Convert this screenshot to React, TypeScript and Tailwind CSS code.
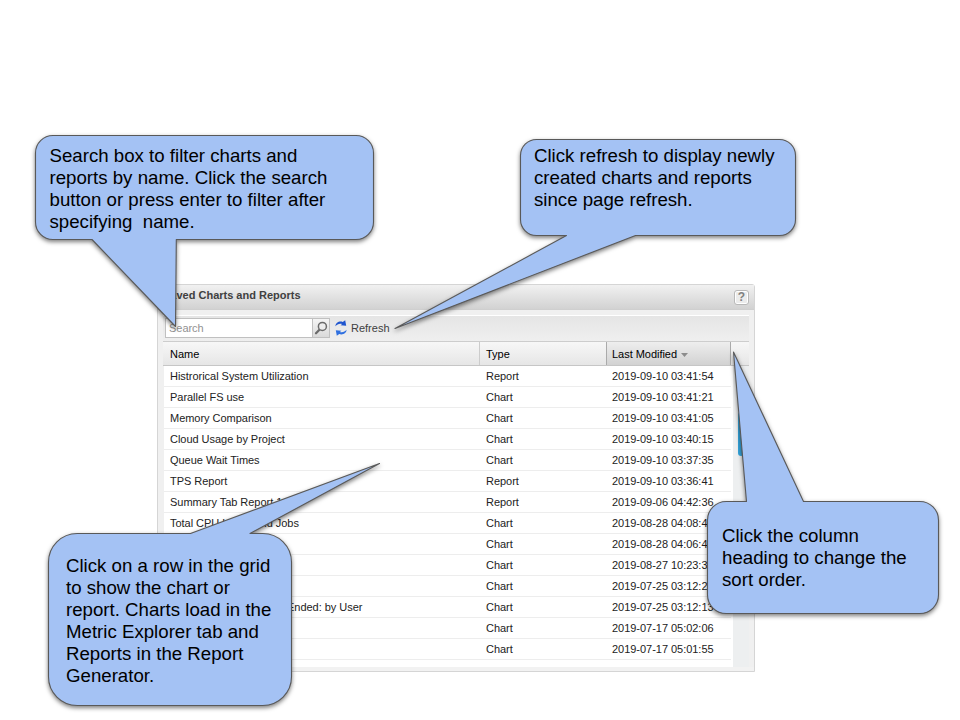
import React from "react";

type Row = { name: string; type: "Report" | "Chart"; modified: string; indent?: boolean };

const rows: Row[] = [
  { name: "Histrorical System Utilization", type: "Report", modified: "2019-09-10 03:41:54" },
  { name: "Parallel FS use", type: "Chart", modified: "2019-09-10 03:41:21" },
  { name: "Memory Comparison", type: "Chart", modified: "2019-09-10 03:41:05" },
  { name: "Cloud Usage by Project", type: "Chart", modified: "2019-09-10 03:40:15" },
  { name: "Queue Wait Times", type: "Chart", modified: "2019-09-10 03:37:35" },
  { name: "TPS Report", type: "Report", modified: "2019-09-10 03:36:41" },
  { name: "Summary Tab Report 1", type: "Report", modified: "2019-09-06 04:42:36" },
  { name: "Total CPU Hours and Jobs", type: "Chart", modified: "2019-08-28 04:08:43" },
  { name: "", type: "Chart", modified: "2019-08-28 04:06:41" },
  { name: "", type: "Chart", modified: "2019-08-27 10:23:32" },
  { name: "", type: "Chart", modified: "2019-07-25 03:12:25" },
  { name: "Ended: by User", type: "Chart", modified: "2019-07-25 03:12:13", indent: true },
  { name: "", type: "Chart", modified: "2019-07-17 05:02:06" },
  { name: "", type: "Chart", modified: "2019-07-17 05:01:55" },
];

function SearchIcon() {
  return (
    <svg width="16" height="16" viewBox="0 0 16 16" fill="none">
      <path d="M6.4 9.8 3 13.2" stroke="#6b6b6b" strokeWidth="2.3" strokeLinecap="round" />
      <circle cx="9.4" cy="6.4" r="4" fill="#ededed" stroke="#6b6b6b" strokeWidth="1.5" />
    </svg>
  );
}

function RefreshIcon() {
  return (
    <svg width="12" height="16" viewBox="0 0 12 16">
      <path d="M.4 6.2C.6 2.8 4.2.6 7.7 1.9L10.2.3 11.2 5.7 5.6 5.3 7.1 4.1C4.6 3.2 2.2 4.2.4 6.2Z" fill="#1f55cf" />
      <path d="M11.6 9.8C11.4 13.2 7.8 15.4 4.3 14.1L1.8 15.7.8 10.3 6.4 10.7 4.9 11.9C7.4 12.8 9.8 11.8 11.6 9.8Z" fill="#2f70e0" />
    </svg>
  );
}

function Panel() {
  return (
    <section className="flex h-[388px] w-[598px] flex-col rounded-t-[3px] border border-[#d5d5d5] bg-[#f0f0f0] text-[11px] leading-[13px] tracking-[-0.03px] text-[#222]">
      <header className="flex h-[25px] shrink-0 items-center justify-between border-b border-[#cfcfcf] bg-linear-to-b from-[#f1f1f1] to-[#d2d2d2] px-[5px]">
        <h1 className="pb-[3px] font-bold tracking-normal text-[#404040]">Saved Charts and Reports</h1>
        <span className="flex h-[15px] w-[15px] items-center justify-center rounded-[3px] border border-[#b9b9b9] bg-[#ececec] text-[12px] font-bold text-[#808080] shadow-[inset_0_0_0_1px_#fff]">
          ?
        </span>
      </header>
      <div className="mx-[5px] mt-[5px] flex min-h-0 flex-1 flex-col">
        <div className="flex h-[27px] shrink-0 items-center border-t border-b border-t-white border-b-[#cdcdcd] bg-linear-to-b from-[#e5e5e5] to-[#efefef] pb-px pl-[2px]">
          <div className="flex h-[20px] w-[165px] border border-[#c0c0c0] bg-white">
            <span className="flex-1 pt-[3px] pl-[3px] text-[#929292]">Search</span>
            <span className="flex w-[17px] items-center justify-center border-l border-[#c0c0c0] bg-linear-to-b from-[#f5f5f5] to-[#dadada]">
              <SearchIcon />
            </span>
          </div>
          <span className="ml-[5px]">
            <RefreshIcon />
          </span>
          <span className="mt-px ml-[4px] tracking-normal text-[#404040]">Refresh</span>
        </div>
        <div className="flex h-[24px] shrink-0 border-b border-[#c6c6c6] bg-linear-to-b from-[#f7f7f7] to-[#e6e6e6] pl-px text-black">
          <div className="w-[316px] border-r border-[#cccccc] pt-[6px] pl-[6px]">Name</div>
          <div className="w-[127px] border-r border-[#aaaaaa] pt-[6px] pl-[6px]">Type</div>
          <div className="flex w-[124px] border-r border-[#aaaaaa] bg-linear-to-b from-[#eeeeee] to-[#d2d2d2] pt-[6px] pl-[5px]">
            Last Modified
            <svg width="7" height="4" viewBox="0 0 7 4" className="mt-[5px] ml-[4px]">
              <path d="M0 0h7L3.5 4Z" fill="#8c8c8c" />
            </svg>
          </div>
        </div>
        <div className="flex min-h-0 flex-1">
          <div className="ml-px flex w-[569px] flex-col overflow-hidden bg-white">
            {rows.map((r) => (
              <div key={r.modified} className="flex h-[21px] w-[567px] shrink-0 items-center border-b border-[#ededed]">
                <span className={r.indent ? "w-[316px] pl-[123px]" : "w-[316px] pl-[6px]"}>{r.name}</span>
                <span className="w-[126px] pl-[6px]">{r.type}</span>
                <span className="pl-[6px] whitespace-nowrap">{r.modified}</span>
              </div>
            ))}
          </div>
          <div className="flex flex-1 justify-center bg-[#edeff0]">
            <div className="mt-[46px] h-[44px] w-[6px] rounded-[3px] bg-[#35a5dc]" />
          </div>
        </div>
      </div>
      <div className="h-[4px] shrink-0 bg-[#f2f2f2]" />
    </section>
  );
}

function Callout({ place, outline, children }: { place: string; outline: string; children: React.ReactNode }) {
  return (
    <>
      <svg
        className="absolute top-0 left-0 drop-shadow-[0px_2px_2px_rgba(0,0,0,0.5)]"
        width="960"
        height="720"
        viewBox="0 0 960 720"
      >
        <path d={outline} fill="#a4c2f4" stroke="#595959" strokeWidth="1.1" strokeLinejoin="round" />
      </svg>
      <p className={place}>{children}</p>
    </>
  );
}

export default function App() {
  return (
    <main className="relative h-[720px] w-[960px] overflow-hidden bg-white pt-[284px] pl-[157px] font-['Liberation_Sans',Arial,sans-serif]">
      <Panel />
      <Callout
        place="absolute top-[145px] left-[49.5px] text-[18.67px] leading-[22px] whitespace-pre text-black"
        outline="M53 135.5H356A17.5 17.5 0 0 1 373.5 153V222A17.5 17.5 0 0 1 356 239.5H176.3L175.5 326.5 92 239.5H53A17.5 17.5 0 0 1 35.5 222V153A17.5 17.5 0 0 1 53 135.5Z"
      >
        {"Search box to filter charts and\nreports by name. Click the search\nbutton or press enter to filter after\nspecifying  name."}
      </Callout>
      <Callout
        place="absolute top-[145px] left-[534px] text-[18.67px] leading-[22px] whitespace-pre text-black"
        outline="M536.5 139.5H779.5A16 16 0 0 1 795.5 155.5V219.5A16 16 0 0 1 779.5 235.5H635.5L395 328.5 566.5 235.5H536.5A16 16 0 0 1 520.5 219.5V155.5A16 16 0 0 1 536.5 139.5Z"
      >
        {"Click refresh to display newly\ncreated charts and reports\nsince page refresh."}
      </Callout>
      <Callout
        place="absolute top-[525px] left-[722px] text-[18.67px] leading-[22px] whitespace-pre text-black"
        outline="M726.2 501.5H746.5L733.5 352 803.5 501.5H919.8A18.7 18.7 0 0 1 938.5 520.2V594.8A18.7 18.7 0 0 1 919.8 613.5H726.2A18.7 18.7 0 0 1 707.5 594.8V520.2A18.7 18.7 0 0 1 726.2 501.5Z"
      >
        {"Click the column\nheading to change the\nsort order."}
      </Callout>
      <Callout
        place="absolute top-[555px] left-[66px] text-[18.67px] leading-[22px] whitespace-pre text-black"
        outline="M77.2 533.5H190.5L379.5 463.5 250 533.5H262.8A28.7 28.7 0 0 1 291.5 562.2V676.8A28.7 28.7 0 0 1 262.8 705.5H77.2A28.7 28.7 0 0 1 48.5 676.8V562.2A28.7 28.7 0 0 1 77.2 533.5Z"
      >
        {"Click on a row in the grid\nto show the chart or\nreport. Charts load in the\nMetric Explorer tab and\nReports in the Report\nGenerator."}
      </Callout>
    </main>
  );
}
